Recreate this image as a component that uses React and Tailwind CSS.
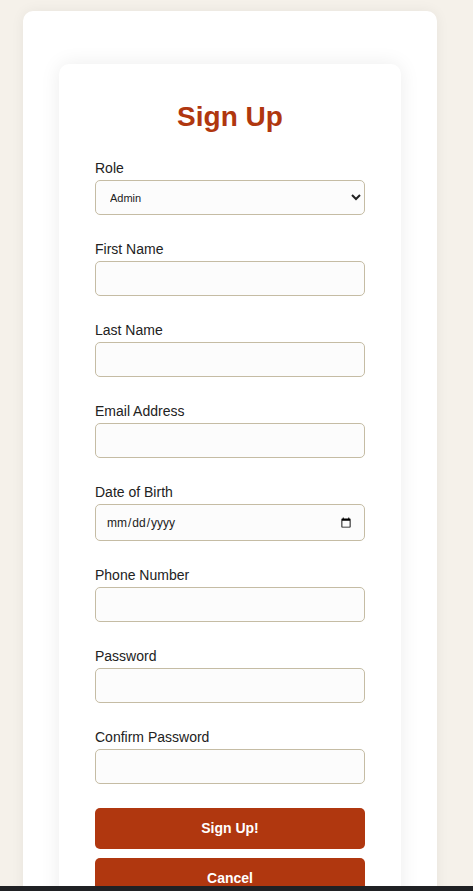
import React, { useState } from 'react';

const fields = [
  { id: 'firstName', label: 'First Name', type: 'text' },
  { id: 'lastName', label: 'Last Name', type: 'text' },
  { id: 'email', label: 'Email Address', type: 'email' },
  { id: 'dob', label: 'Date of Birth', type: 'date' },
  { id: 'phone', label: 'Phone Number', type: 'tel' },
  { id: 'password', label: 'Password', type: 'password' },
  { id: 'confirm', label: 'Confirm Password', type: 'password' },
];

const inputClass =
  'mt-[4px] block w-full rounded-[5px] border border-[#c5bca4] bg-[#fcfcfc] px-[10px] text-[#222] outline-none';

const App = () => {
  const [role, setRole] = useState('Admin');

  return (
    <div className="min-h-screen bg-[#f5f1ea] pl-[23px] pt-[11px] font-['Liberation_Sans',Arial,sans-serif]">
      <div className="w-[414px] rounded-t-[10px] bg-white px-[36px] pt-[53px] shadow-[0_0_14px_rgba(0,0,0,0.06)]">
        <div className="rounded-t-[10px] bg-white px-[36px] pt-[37px] pb-[20px] shadow-[0_0_20px_rgba(0,0,0,0.08)]">
          <h2 className="text-center text-[28px] font-bold leading-[32px] text-[#b0370f]">Sign Up</h2>

          <form className="mt-[27px]" onSubmit={e => e.preventDefault()}>
            <div className="mb-[26px]">
              <label htmlFor="role" className="block text-[14px] leading-[16px] text-[#222]">Role</label>
              <select
                id="role"
                value={role}
                onChange={e => setRole(e.target.value)}
                className={`${inputClass} h-[35px] text-[11px]`}
              >
                <option>Admin</option>
                <option>User</option>
              </select>
            </div>

            {fields.map(f => (
              <div key={f.id} className={f.id === 'confirm' ? 'mb-[24px]' : 'mb-[26px]'}>
                <label htmlFor={f.id} className="block text-[14px] leading-[16px] text-[#222]">{f.label}</label>
                <input
                  id={f.id}
                  type={f.type}
                  className={`${inputClass} ${f.type === 'date' ? 'h-[37px] text-[12px]' : 'h-[35px] text-[14px]'}`}
                />
              </div>
            ))}

            <button
              type="submit"
              className="block h-[41px] w-full rounded-[5px] bg-[#b0370f] text-[14px] font-bold text-white"
            >
              Sign Up!
            </button>
            <button
              type="button"
              className="mt-[9px] block h-[41px] w-full rounded-[5px] bg-[#b0370f] text-[14px] font-bold text-white"
            >
              Cancel
            </button>
          </form>
        </div>
      </div>
      <div className="fixed bottom-0 left-0 right-0 h-[5px] bg-[#202124]" />
    </div>
  );
};

export default App;
